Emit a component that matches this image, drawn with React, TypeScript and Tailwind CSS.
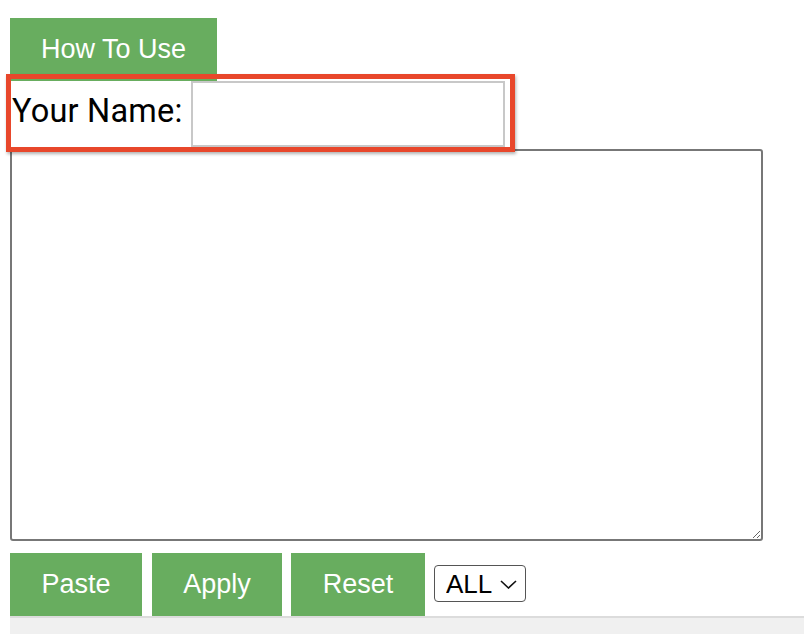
import { useState } from "react";

const btn =
  "h-[63px] bg-[#68ad5f] text-white text-[27px] font-['Liberation_Sans',Arial,sans-serif] flex items-center justify-center";

export default function App() {
  const [name, setName] = useState("");
  const [text, setText] = useState("");
  const [mode, setMode] = useState("ALL");

  return (
    <div className="relative h-[634px] overflow-hidden bg-white pl-[10px] pt-[18px] font-['Liberation_Sans',Arial,sans-serif]">
      <button className={`${btn} w-[207px] h-[62px]`}>How To Use</button>

      {/* name row */}
      <div className="flex items-center h-[66px]">
        <label className="ml-[2px] w-[179px] text-[32.5px] leading-none text-black font-['Roboto',sans-serif] -mt-[6px] tracking-[0.2px]">
          Your Name:
        </label>
        <input
          value={name}
          onChange={(e) => setName(e.target.value)}
          className="w-[314px] h-[66px] border-2 border-[#c8c8c8] bg-white outline-none px-2 text-[20px]"
        />
      </div>

      <textarea
        value={text}
        onChange={(e) => setText(e.target.value)}
        className="block mt-[2px] w-[753px] h-[392px] border-2 border-[#777777] rounded-[3px] outline-none resize p-1"
      />

      <div className="flex items-center mt-[12px]">
        <button className={`${btn} w-[132px]`}>Paste</button>
        <button className={`${btn} w-[130px] ml-[10px]`}>Apply</button>
        <button className={`${btn} w-[134px] ml-[9px]`}>Reset</button>
        <div className="relative ml-[9px] -mt-[2px]">
          <select
            value={mode}
            onChange={(e) => setMode(e.target.value)}
            className="appearance-none w-[92px] h-[37px] border border-[#555555] rounded-[4px] bg-white pl-[11px] text-[26px] leading-none text-black outline-none"
          >
            <option>ALL</option>
          </select>
          <svg
            className="absolute right-[9px] top-[15px] pointer-events-none"
            width="17"
            height="9"
            viewBox="0 0 17 9"
            fill="none"
          >
            <path d="M1 1l7.5 7L16 1" stroke="#111" strokeWidth="1.6" />
          </svg>
        </div>
      </div>

      <div className="w-[794px] h-[30px] bg-[#f0f0f0] border-t-2 border-[#dcdcdc]" />

      {/* highlight around the name row */}
      <div className="absolute left-[6px] top-[74px] w-[509px] h-[78px] border-[5px] border-[#e8472b] shadow-[1px_2px_3px_rgba(0,0,0,0.3)] pointer-events-none" />
    </div>
  );
}
